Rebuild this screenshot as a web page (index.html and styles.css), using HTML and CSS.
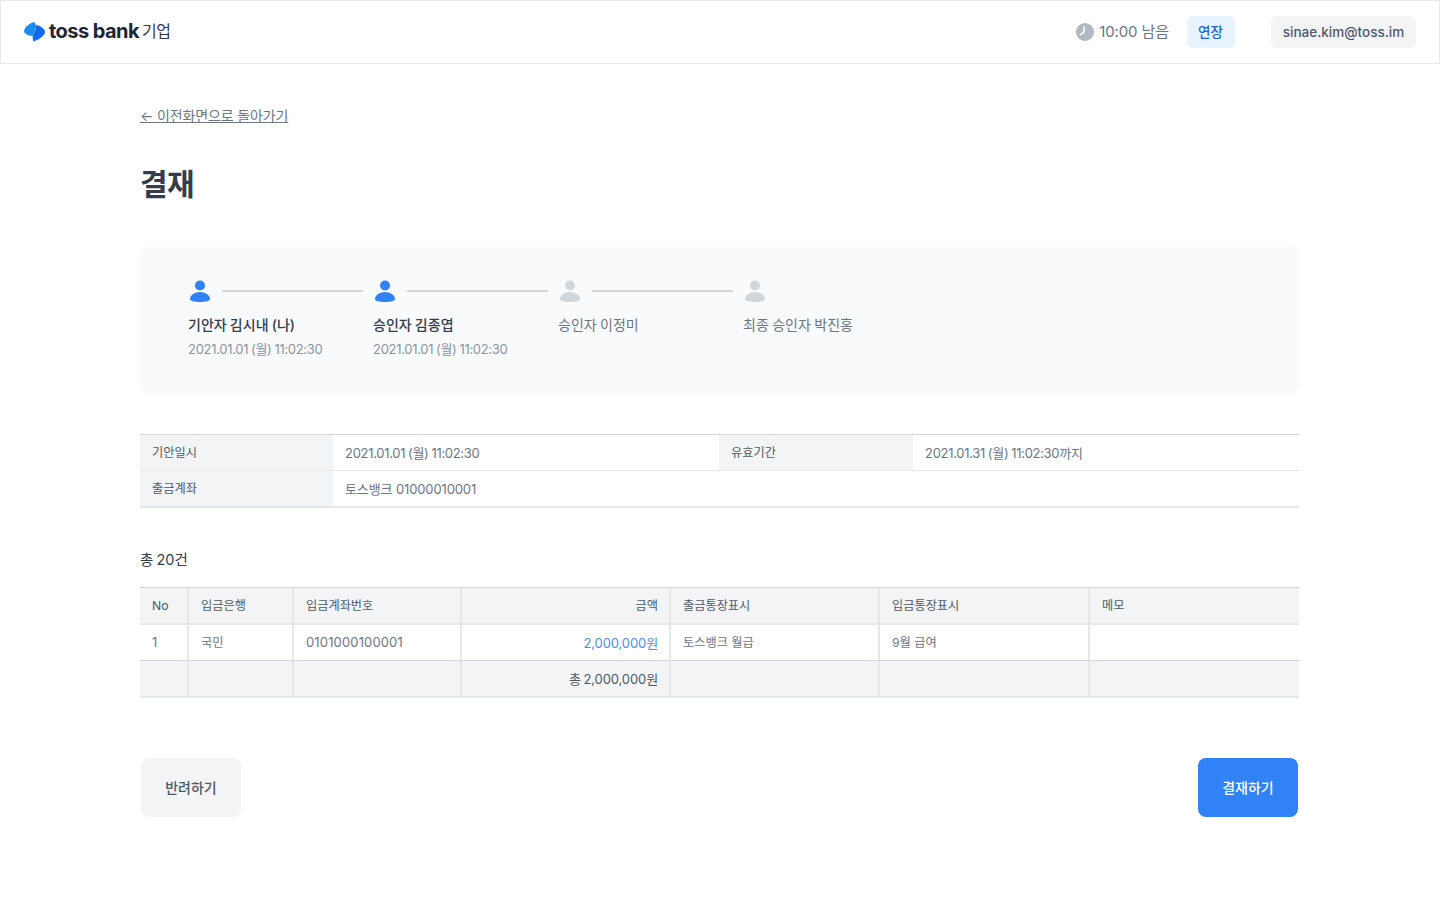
FILE: index.html
```html
<!DOCTYPE html>
<html lang="ko">
<head>
<meta charset="utf-8">
<title>결재</title>
<link rel="stylesheet" href="styles.css">
</head>
<body>
<header class="topbar">
  <div class="logo">
    <svg class="logo-mark" width="22" height="20" viewBox="0 0 22 20">
      <path d="M10 0C5 1.500 0 5.500 0 10C2 12.500 5 14 9 14C10.500 11 12 7 12 4C12 2.500 11 1 10 0Z" fill="#1b8cf5"/>
      <path d="M12 3C16 3.500 21 6.500 21 10C21 14 14 18 9.500 19.500C8.500 17 8.500 15 9 14C11.500 11 13 7 12 3Z" fill="#0f6cf2"/>
      <path d="M12 4C12.500 7.500 11 11 9 14C12 12.500 14 8.500 12 4Z" fill="#0a46cc"/>
    </svg>
    <span class="logo-word">toss bank</span>
    <span class="logo-sub">기업</span>
  </div>
  <div class="session">
    <svg class="clock" width="18" height="18" viewBox="0 0 18 18">
      <circle cx="9" cy="9" r="9" fill="#b0b8c1"/>
      <path d="M8.300 3.300L7.800 9.500L4 11.700" fill="none" stroke="#fff" stroke-width="1.600"/>
    </svg>
    <span class="time">10:00 남음</span>
    <button class="btn-extend">연장</button>
    <button class="btn-user">sinae.kim@toss.im</button>
  </div>
</header>

<main class="page">
  <a class="back" href="#">← 이전화면으로 돌아가기</a>
  <h1 class="title">결재</h1>

  <section class="approval">
    <div class="step done">
      <div class="step-track">
        <svg class="person" width="20" height="22" viewBox="0 0 20 22"><circle cx="10" cy="5.500" r="5" /><path d="M0 19C0 15 5 12 10 12S20 15 20 19C20 21 16 22 10 22S0 21 0 19Z"/></svg>
        <span class="step-line"></span>
      </div>
      <div class="step-name">기안자 김시내 (나)</div>
      <div class="step-date">2021.01.01 (월) 11:02:30</div>
    </div>
    <div class="step done">
      <div class="step-track">
        <svg class="person" width="20" height="22" viewBox="0 0 20 22"><circle cx="10" cy="5.500" r="5" /><path d="M0 19C0 15 5 12 10 12S20 15 20 19C20 21 16 22 10 22S0 21 0 19Z"/></svg>
        <span class="step-line"></span>
      </div>
      <div class="step-name">승인자 김종엽</div>
      <div class="step-date">2021.01.01 (월) 11:02:30</div>
    </div>
    <div class="step">
      <div class="step-track">
        <svg class="person" width="20" height="22" viewBox="0 0 20 22"><circle cx="10" cy="5.500" r="5" /><path d="M0 19C0 15 5 12 10 12S20 15 20 19C20 21 16 22 10 22S0 21 0 19Z"/></svg>
        <span class="step-line"></span>
      </div>
      <div class="step-name">승인자 이정미</div>
    </div>
    <div class="step">
      <div class="step-track">
        <svg class="person" width="20" height="22" viewBox="0 0 20 22"><circle cx="10" cy="5.500" r="5" /><path d="M0 19C0 15 5 12 10 12S20 15 20 19C20 21 16 22 10 22S0 21 0 19Z"/></svg>
      </div>
      <div class="step-name">최종 승인자 박진홍</div>
    </div>
  </section>

  <table class="info">
    <colgroup><col class="c-th"><col class="c-td"><col class="c-th2"><col></colgroup>
    <tr>
      <th>기안일시</th><td class="date">2021.01.01 (월) 11:02:30</td>
      <th>유효기간</th><td class="date">2021.01.31 (월) 11:02:30까지</td>
    </tr>
    <tr>
      <th>출금계좌</th><td colspan="3" class="acct">토스뱅크 01000010001</td>
    </tr>
  </table>

  <p class="count">총 20건</p>

  <table class="list">
    <colgroup>
      <col class="w-no"><col class="w-bank"><col class="w-acct"><col class="w-amt"><col class="w-amt"><col class="w-col"><col>
    </colgroup>
    <thead>
      <tr><th>No</th><th>입금은행</th><th>입금계좌번호</th><th class="num">금액</th><th>출금통장표시</th><th>입금통장표시</th><th>메모</th></tr>
    </thead>
    <tbody>
      <tr><td>1</td><td class="ko">국민</td><td class="digits">0101000100001</td><td class="num amount">2,000,000원</td><td class="ko">토스뱅크 월급</td><td class="ko">9월 급여</td><td></td></tr>
    </tbody>
    <tfoot>
      <tr><td></td><td></td><td></td><td class="num total">총 2,000,000원</td><td></td><td></td><td></td></tr>
    </tfoot>
  </table>

  <div class="actions">
    <button class="btn btn-reject">반려하기</button>
    <button class="btn btn-approve">결재하기</button>
  </div>
</main>
</body>
</html>
```

FILE: styles.css
```css
* { box-sizing: border-box; }
html, body { margin: 0; padding: 0; }
body {
  background: #fff;
  color: #4e5968;
  font-family: Inter, "Noto Sans CJK KR", "Noto Sans", sans-serif;
  font-size: 13px;
  height: 900px;
  overflow: hidden;
}
button { font-family: inherit; border: 0; cursor: pointer; }

.topbar {
  height: 64px;
  border: 1px solid #e5e8eb;
  display: flex;
  align-items: center;
  justify-content: space-between;
  padding: 0 23px;
}
.logo { display: flex; align-items: center; }
.logo-mark { display: block; margin-right: 3px; }
.logo-word {
  font-size: 20px;
  line-height: 24px;
  font-weight: 700;
  letter-spacing: -0.55px;
  color: #202632;
  padding-bottom: 2px;
}
.logo-sub {
  font-size: 16px;
  line-height: 24px;
  color: #333d4b;
  margin-left: 3px;
  letter-spacing: -0.6px;
  padding-bottom: 2px;
}

.session { display: flex; align-items: center; }
.clock { display: block; margin-right: 5px; }
.time {
  font-size: 15px;
  line-height: 20px;
  color: #6b7684;
  margin-right: 18px;
  letter-spacing: -0.1px;
  padding-bottom: 1px;
}
.btn-extend {
  width: 48px;
  height: 32px;
  border-radius: 6px;
  background: #e8f3ff;
  color: #1b64da;
  font-size: 13.500px;
  font-weight: 500;
  padding: 0 1px 2px 0;
  margin-right: 36px;
}
.btn-user {
  width: 145px;
  height: 32px;
  border-radius: 6px;
  background: #f2f4f6;
  color: #4e5968;
  font-size: 13.500px;
  font-weight: 500;
  padding: 0;
}

.page { padding: 42px 141px 0 140px; }
.back {
  display: block;
  width: max-content;
  font-size: 14px;
  line-height: 20px;
  color: #6b7684;
  text-decoration: underline;
  letter-spacing: -0.14px;
}
.title {
  margin: 36px 0 0;
  font-size: 30px;
  line-height: 44px;
  font-weight: 700;
  color: #333d4b;
  letter-spacing: -0.5px;
}

.approval {
  margin-top: 41px;
  height: 147px;
  border-radius: 8px;
  background: #f9fafc;
  padding: 32px 48px;
  display: flex;
}
.step { width: 185px; }
.step-track { display: flex; align-items: center; height: 24px; padding-left: 2px; }
.person { display: block; fill: #d1d6db; }
.done .person { fill: #3182f6; }
.step-line {
  width: 141px;
  height: 2px;
  background: #d1d6db;
  margin-left: 12px;
}
.step-name {
  margin-top: 12px;
  font-size: 14px;
  line-height: 20px;
  color: #6b7684;
  word-spacing: -0.5px;
}
.done .step-name { color: #333d4b; font-weight: 500; }
.step-date {
  margin-top: 4px;
  font-size: 13px;
  line-height: 20px;
  color: #8b95a1;
  letter-spacing: -0.3px;
  word-spacing: -0.5px;
}

table { border-collapse: separate; border-spacing: 0; width: 100%; table-layout: fixed; }

.info {
  margin-top: 40px;
  border-top: 1px solid #d1d6db;
  border-bottom: 2px solid #e5e8eb;
}
.c-th { width: 193px; }
.c-td { width: 386px; }
.c-th2 { width: 194px; }
.info th, .info td {
  height: 36px;
  padding: 0 12px 1px;
  font-size: 13px;
  font-weight: 400;
  text-align: left;
  color: #6b7684;
  border-top: 1px solid #e5e8eb;
}
.info td.date { letter-spacing: -0.3px; word-spacing: -0.5px; }
.info td.acct { letter-spacing: -0.12px; }
.info tr:first-child th, .info tr:first-child td { border-top: 0; height: 35px; }
.info th { background: #f2f4f6; color: #4e5968; font-size: 12.200px; }

.count {
  margin: 33px 0 0;
  font-size: 14.500px;
  line-height: 38px;
  height: 46px;
  color: #333d4b;
  word-spacing: -1px;
}

.list { border-top: 1px solid #d1d6db; border-bottom: 2px solid #e5e8eb; }
.w-no { width: 49px; }
.w-bank { width: 105px; }
.w-acct { width: 168px; }
.w-amt { width: 209px; }
.w-col { width: 210px; }
.list th, .list td {
  height: 36px;
  padding: 0 12px 1px;
  font-size: 13px;
  font-weight: 400;
  text-align: left;
  color: #6b7684;
  border-right: 2px solid #e5e8eb;
  border-bottom: 1px solid #d1d6db;
}
.list th:last-child, .list td:last-child { border-right: 0; }
.list thead th {
  height: 37px;
  background: #f2f4f6;
  color: #4e5968;
  font-size: 12.200px;
  border-bottom: 2px solid #e5e8eb;
}
.list tfoot td { height: 35px; border-bottom: 0; background: #f2f4f6; color: #4e5968; }
.list .num { text-align: right; padding-right: 11px; }
.list .amount { color: #4a90e2; letter-spacing: -0.1px; }
.list .digits { letter-spacing: 0.15px; }
.list .ko { font-size: 12.200px; }
.list .total { letter-spacing: -0.1px; word-spacing: -1px; }

.actions {
  margin-top: 60px;
  display: flex;
  justify-content: space-between;
  padding: 0 1px;
}
.btn {
  width: 100px;
  height: 59px;
  border-radius: 8px;
  font-size: 14px;
  font-weight: 500;
  padding: 0 0 1px;
}
.btn-reject { background: #f2f4f6; color: #4e5968; }
.btn-approve { background: #3182f6; color: #fff; }
```
